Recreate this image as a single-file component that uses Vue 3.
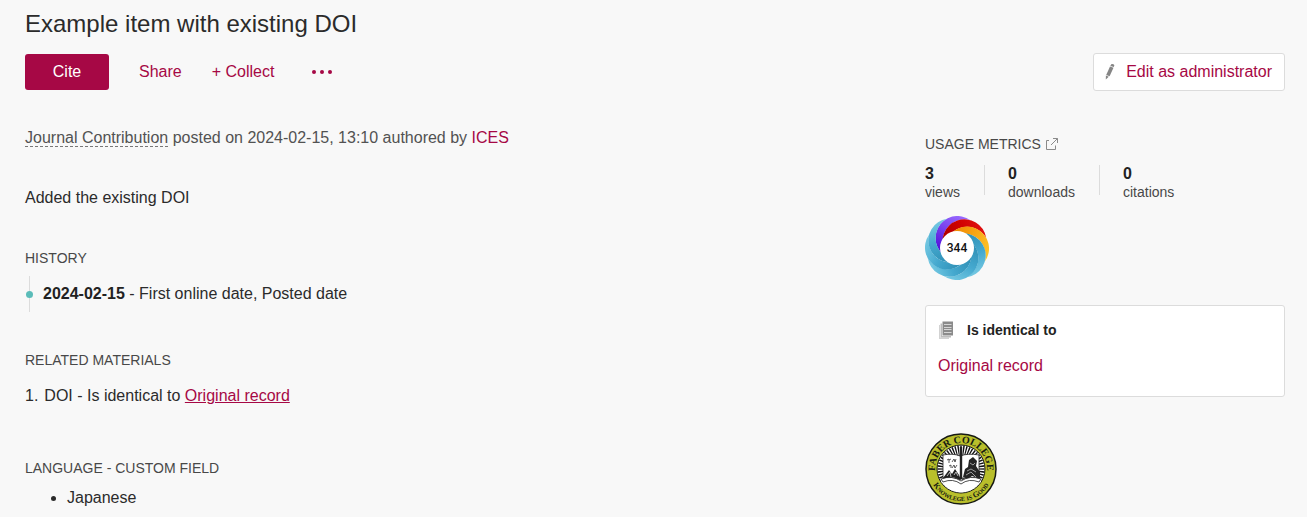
<script setup>
const metrics = [
  { value: 3, label: 'views' },
  { value: 0, label: 'downloads' },
  { value: 0, label: 'citations' },
]

// One entry per petal of the attention badge, clockwise from the top.
const petals = ['purple', 'red', 'yellow', 'blue', 'blue', 'blue', 'blue', 'blue'].map(
  (tone, i) => ({ tone, angle: i * 45 - 64 }),
)

const rays = Array.from({ length: 48 }, (_, i) => i * 7.5)
</script>

<template>
  <div class="page">
    <h1>Example item with existing DOI</h1>

    <div class="toolbar">
      <button class="cite" type="button">Cite</button>
      <button class="plain" type="button">Share</button>
      <button class="plain" type="button">+ Collect</button>
      <button class="plain more" type="button" aria-label="More actions">
        <svg width="22" height="6" viewBox="0 0 22 6" fill="#a60845">
          <circle cx="3" cy="3" r="2" /><circle cx="11" cy="3" r="2" /><circle cx="19" cy="3" r="2" />
        </svg>
      </button>
      <a class="admin" href="#">
        <svg width="12" height="18" viewBox="0 0 12 18" fill="#858585">
          <path d="M6.600 2.200 L7.600 1 Q9.500 .6 10.400 2.300 L9.800 4 L6.400 2.900 Z" />
          <path d="M6 3.600 L9.500 4.800 L5.600 13.200 L2.200 11.900 Z" />
          <path d="M1.900 12.600 L4.800 13.800 L1.800 16.600 Z" />
        </svg>
        Edit as administrator
      </a>
    </div>

    <div class="columns">
      <main>
        <p class="meta">
          <span class="kind">Journal Contribution</span> posted on 2024-02-15, 13:10 authored by
          <a href="#">ICES</a>
        </p>
        <p class="description">Added the existing DOI</p>

        <section class="history">
          <h2>HISTORY</h2>
          <div class="event">
            <span class="rail"><span class="dot"></span></span>
            <span><strong>2024-02-15</strong> - First online date, Posted date</span>
          </div>
        </section>

        <section class="related">
          <h2>RELATED MATERIALS</h2>
          <div class="material">
            <span>1.</span>
            <span>DOI - Is identical to <a class="underlined" href="#">Original record</a></span>
          </div>
        </section>

        <section class="language">
          <h2>LANGUAGE - CUSTOM FIELD</h2>
          <ul>
            <li>Japanese</li>
          </ul>
        </section>
      </main>

      <aside>
        <h2 class="usage">
          USAGE METRICS
          <svg width="14" height="14" viewBox="0 0 14 14" fill="none" stroke="#8a8a8a">
            <path d="M4 3.500H1.500V12.500H10.500V8.500M8 1.500H12.500V6M12.500 1.500L6 8" />
          </svg>
        </h2>
        <div class="metrics">
          <div v-for="metric in metrics" :key="metric.label" class="metric">
            <strong>{{ metric.value }}</strong>
            <span>{{ metric.label }}</span>
          </div>
        </div>

        <svg class="donut" width="64" height="64" viewBox="-32 -32 64 64" role="img" aria-label="Attention score 344">
          <defs>
            <linearGradient id="blue" x1="0" y1="0" x2="1" y2="0">
              <stop offset="0" stop-color="#2d8db3" /><stop offset=".55" stop-color="#45a9cf" /><stop offset="1" stop-color="#74c8e2" />
            </linearGradient>
            <linearGradient id="purple" x1="0" y1="0" x2="1" y2="0">
              <stop offset="0" stop-color="#4b08d8" /><stop offset="1" stop-color="#9a6bff" />
            </linearGradient>
            <linearGradient id="red" x1="0" y1="0" x2="1" y2="0">
              <stop offset="0" stop-color="#a90000" /><stop offset=".5" stop-color="#cf0000" /><stop offset="1" stop-color="#e01010" />
            </linearGradient>
            <linearGradient id="yellow" x1="0" y1="0" x2="1" y2="0">
              <stop offset="0" stop-color="#ef8500" /><stop offset="1" stop-color="#ffc52a" />
            </linearGradient>
          </defs>
          <path
            v-for="petal in petals"
            :key="petal.angle"
            d="M-12.4 0A22 22 0 1 1 30.900 0A22 22 0 0 0 -12.4 0Z"
            :fill="`url(#${petal.tone})`"
            :transform="`rotate(${petal.angle})`"
          />
          <circle r="17" fill="#fff" />
          <text y="4" text-anchor="middle">344</text>
        </svg>

        <div class="card">
          <h3>
            <svg width="16" height="18" viewBox="0 0 16 18">
              <path d="M1 4H11V18H1Z" fill="#d2d2d2" />
              <path d="M2 2.500H13V16.500H2Z" fill="#fff" />
              <path d="M2.500 2.500H13V16.500H2.500Z" fill="#bcbcbc" />
              <path d="M4 1H15V15H4Z" fill="#fff" />
              <path d="M4.500 .5H15V14.500H4.500Z" fill="#8b8b8b" />
              <path d="M6 3.500H13.500M6 6.500H13.500M6 8.500H13.500M6 11.500H13.500" stroke="#d6d6d6" />
            </svg>
            Is identical to
          </h3>
          <a href="#">Original record</a>
        </div>

        <svg class="seal" width="72" height="72" viewBox="-36 -36 72 72" role="img" aria-label="Faber College seal">
          <defs>
            <path id="upper" d="M-22.500 13A26 26 0 1 1 22.500 13" />
            <path id="lower" d="M-32 0A32 32 0 0 0 32 0" />
            <clipPath id="disc"><circle r="23.500" /></clipPath>
          </defs>
          <circle r="35" fill="#b9bf2b" stroke="#171a12" stroke-width="1.500" />
          <circle r="24" fill="#fff" stroke="#171a12" stroke-width="1" />
          <g clip-path="url(#disc)">
            <path v-for="ray in rays" :key="ray" d="M0 0L24 -.8V.8Z" fill="#111" :transform="`rotate(${ray})`" />
            <path d="M-20 11H20V24H-20Z" fill="#fff" />
          </g>
          <path d="M-18 -14Q-8 -16 -1 -13Q7 -16 18 -14V9H-18Z" fill="#fff" stroke="#222" stroke-width=".8" />
          <path d="M-1.200 -22H1.200V10H-1.200Z" fill="#222" />
          <path d="M-14 -9l2 -1v4m0 -3l2 -1m1 3l2 -3l1 3l1 -3M-12 -3l2 -1v3m1 0l2 -3l1 3l2 -3" fill="none" stroke="#333" stroke-width=".8" />
          <path d="M-18 9L-12 1L-9 5L-6 0L-2 6L0 11L-8 8L-12 11Z" fill="#222" />
          <path d="M-14 7l3 -4l1 5M-7 6l2 -3l2 4" stroke="#ddd" stroke-width=".8" fill="none" />
          <path d="M2 8L4 0L7 -2L8 -9L12 -12L16 -8L15 -3L19 3V10L11 7L7 10Z" fill="#252525" />
          <path d="M9 -6l3 2l2 -2M6 2l4 -2l5 3M5 6l5 -3l5 5" stroke="#bbb" stroke-width=".8" fill="none" />
          <path d="M-20 10Q-9 6 0 12Q9 6 20 10L18 13Q8 9 0 15Q-8 9 -18 13Z" fill="#fff" stroke="#222" stroke-width=".8" />
          <text class="name"><textPath href="#upper" startOffset="50%" text-anchor="middle">FABER COLLEGE</textPath></text>
          <text class="motto"><textPath href="#lower" startOffset="50%" text-anchor="middle">Knowlege is Good</textPath></text>
        </svg>
      </aside>
    </div>
  </div>
</template>

<style>
body {
  background: #f8f8f8;
}
</style>

<style scoped>
.page {
  padding: 8px 22px 0 25px;
  color: #2b2b2b;
  font: 16px/20px "Liberation Sans", Arial, sans-serif;
}
h1, h2, h3, p, ul {
  margin: 0;
  font-weight: 400;
}
h1 {
  font-size: 24px;
  line-height: 32px;
}
h2 {
  color: #484848;
  font-size: 14px;
  line-height: 20px;
}
a {
  color: #a60845;
  text-decoration: none;
}
button {
  border: 0;
  padding: 0;
  background: none;
  color: #a60845;
  font: inherit;
  cursor: pointer;
}
.toolbar {
  display: flex;
  align-items: center;
  gap: 30px;
  margin-top: 13px;
}
.cite {
  width: 84px;
  height: 36px;
  border-radius: 3px;
  background: #a60845;
  color: #fff;
}
.more {
  display: flex;
  margin-left: 7px;
}
.admin {
  display: flex;
  align-items: center;
  gap: 10px;
  box-sizing: border-box;
  height: 38px;
  margin-left: auto;
  padding: 0 12px 0 10px;
  border: 1px solid #dcdcdc;
  border-radius: 3px;
  background: #fff;
}
.columns {
  display: grid;
  grid-template-columns: minmax(0, 1fr) 360px;
  gap: 32px;
}
.meta {
  margin-top: 37px;
  color: #525252;
}
.kind {
  border-bottom: 1px dashed #777;
}
.description, .history {
  margin-top: 40px;
}
.event {
  display: flex;
  align-items: center;
  gap: 9px;
  height: 36px;
  margin-top: 8px;
}
.rail {
  display: flex;
  align-items: center;
  width: 9px;
  height: 100%;
  background: linear-gradient(#dcdcdc, #dcdcdc) center / 1px 100% no-repeat;
}
.dot {
  width: 7px;
  height: 7px;
  margin: 0 auto;
  border-radius: 50%;
  background: #5bbcb9;
}
strong {
  color: #222;
}
.related {
  margin-top: 38px;
}
.material {
  display: flex;
  gap: 6px;
  margin-top: 16px;
}
.underlined {
  text-decoration: underline;
}
.language {
  margin-top: 52px;
}
ul {
  margin-top: 10px;
  padding-left: 42px;
}
.usage {
  display: flex;
  align-items: center;
  gap: 4px;
  margin-top: 43px;
}
.metrics {
  display: flex;
  margin-top: 11px;
}
.metric {
  display: flex;
  flex-direction: column;
  padding-right: 24px;
  color: #484848;
  font-size: 14px;
  line-height: 18px;
}
.metric strong {
  font-size: 16px;
}
.metric + .metric {
  padding-left: 24px;
  background: linear-gradient(#dcdcdc, #dcdcdc) left top / 1px 30px no-repeat;
}
.donut {
  display: block;
  margin-top: 15px;
}
.donut text {
  fill: #111;
  font: 500 12px Roboto, "Noto Sans", sans-serif;
}
.card {
  margin-top: 25px;
  padding: 14px 12px 20px;
  border: 1px solid #dcdcdc;
  border-radius: 3px;
  background: #fff;
}
h3 {
  display: flex;
  align-items: center;
  gap: 13px;
  margin-bottom: 16px;
  color: #222;
  font-size: 14px;
  font-weight: 700;
}
.seal {
  display: block;
  margin-top: 36px;
}
.seal text {
  fill: #171a12;
  font-family: "Liberation Serif", serif;
  font-weight: 700;
}
.name {
  font-size: 10px;
}
.motto {
  font-size: 8px;
  font-variant: small-caps;
}
</style>
